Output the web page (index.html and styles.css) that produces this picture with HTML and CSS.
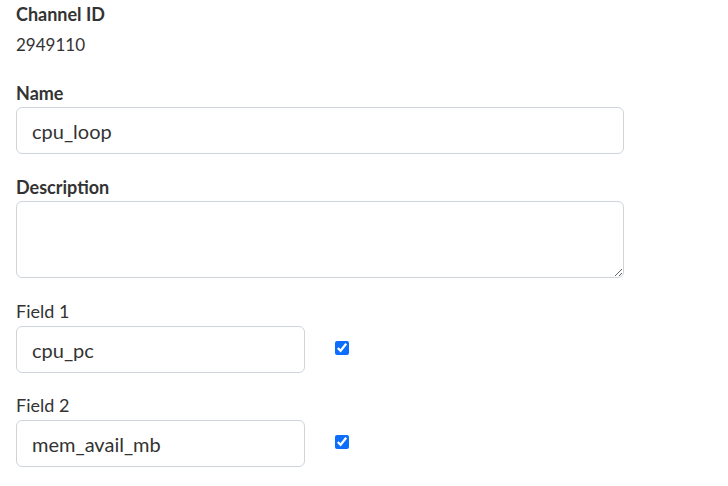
FILE: index.html
```html
<!DOCTYPE html>
<html>
<head>
<meta charset="utf-8">
<link rel="stylesheet" href="styles.css">
</head>
<body>
<form class="settings">
  <div class="info">
    <div class="info-label">Channel ID</div>
    <div class="info-value">2949110</div>
  </div>

  <div class="group">
    <label class="label bold" for="name">Name</label>
    <input class="control" id="name" type="text" value="cpu_loop">
  </div>

  <div class="group">
    <label class="label bold" for="desc">Description</label>
    <textarea class="control area" id="desc"></textarea>
  </div>

  <div class="group field-group">
    <label class="label field-label" for="f1">Field 1</label>
    <div class="field-row">
      <input class="control short" id="f1" type="text" value="cpu_pc">
      <input class="check" type="checkbox" checked>
    </div>
  </div>

  <div class="group field-group">
    <label class="label field-label" for="f2">Field 2</label>
    <div class="field-row">
      <input class="control short" id="f2" type="text" value="mem_avail_mb">
      <input class="check" type="checkbox" checked>
    </div>
  </div>
</form>
</body>
</html>
```
FILE: styles.css
```css
html, body {
  margin: 0;
  padding: 0;
  background: #fff;
}

body {
  font-family: Lato, "Noto Sans", sans-serif;
  color: #333;
}

.settings {
  padding: 2px 0 0 16px;
  display: flex;
  flex-direction: column;
}

.info {
  display: flex;
  flex-direction: column;
  gap: 7px;
  margin-bottom: 24px;
}

.info-label {
  font-size: 18px;
  line-height: 24px;
  font-weight: 700;
}

.info-value {
  font-size: 17px;
  line-height: 24px;
}

.group {
  display: flex;
  flex-direction: column;
  margin-bottom: 21px;
}

.field-group {
  margin-bottom: 20px;
}

.label {
  display: block;
  font-size: 18px;
  line-height: 24px;
  margin-bottom: 2px;
}

.field-label {
  margin-bottom: 3px;
}

.bold {
  font-weight: 700;
}

.control {
  box-sizing: border-box;
  width: 608px;
  height: 47px;
  margin: 0;
  padding: 0 15px;
  font-family: Lato, "Noto Sans", sans-serif;
  font-size: 20px;
  color: #333;
  background: #fff;
  border: 1px solid #ced4da;
  border-radius: 6px;
  outline: none;
}

.area {
  height: 77px;
  padding: 8px 15px;
  resize: vertical;
  display: block;
}

.field-row {
  display: flex;
  align-items: center;
  gap: 30px;
}

.short {
  width: 289px;
}

.check {
  width: 14px;
  height: 14px;
  margin: 0 0 4px 0;
  accent-color: #0d6efd;
}
```
